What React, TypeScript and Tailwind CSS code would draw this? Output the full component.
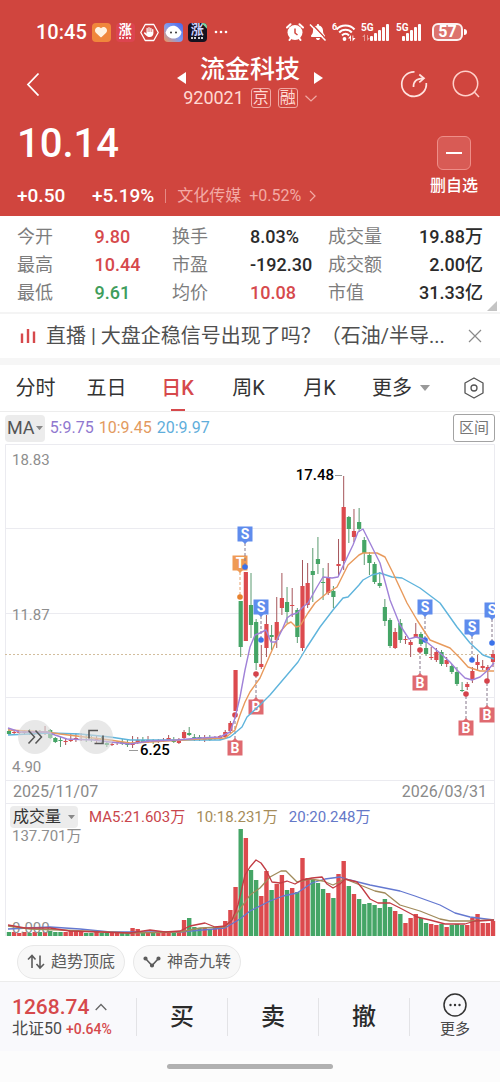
import { FaBell, FaHand, FaHeart } from "react-icons/fa6";

const UP = "#dc4a4e";
const DOWN = "#45a566";

type TStat = {
  label: string
  value: string
  color?: string
}

// [direction, body top, body bottom, wick top, wick bottom, volume height]
type TCandle = [number, number, number, number, number, number];

type TMarker = {
  kind: "S" | "B" | "T"
  x: number
  y: number
  dot: number
}

const stats: TStat[] = [
  { label: "今开", value: "9.80", color: "text-[#d6494c]" },
  { label: "换手", value: "8.03%" },
  { label: "成交量", value: "19.88万" },
  { label: "最高", value: "10.44", color: "text-[#d6494c]" },
  { label: "市盈", value: "-192.30" },
  { label: "成交额", value: "2.00亿" },
  { label: "最低", value: "9.61", color: "text-[#3f9d5c]" },
  { label: "均价", value: "10.08", color: "text-[#d6494c]" },
  { label: "市值", value: "31.33亿" },
];

const tabs = ["分时", "五日", "日K", "周K", "月K"];

const candles: TCandle[] = [
  [0, 731, 734, 729, 735, 4], [1, 732, 733, 730, 735, 4], [1, 732, 733, 730, 735, 3], [1, 731, 733, 730, 734, 4],
  [0, 731, 733, 729, 735, 3], [1, 732, 734, 731, 735, 4], [0, 732, 733, 730, 735, 4], [1, 731, 733, 726, 735, 4],
  [0, 730, 738, 729, 739, 5], [0, 738, 742, 737, 743, 4], [0, 740, 741, 737, 747, 4], [1, 741, 742, 738, 745, 4],
  [1, 740, 741, 733, 742, 5], [1, 738, 740, 733, 742, 6], [1, 739, 740, 733, 741, 5], [0, 739, 740, 735, 742, 3],
  [0, 739, 740, 736, 742, 3], [1, 739, 741, 735, 743, 4], [0, 738, 740, 736, 743, 3], [0, 743, 745, 741, 747, 3],
  [1, 744, 745, 742, 746, 4], [1, 742, 743, 741, 745, 3], [0, 742, 744, 739, 745, 3], [0, 743, 745, 740, 747, 4],
  [1, 743, 745, 736, 748, 8], [1, 740, 742, 737, 744, 7], [0, 740, 742, 737, 743, 4], [1, 740, 741, 736, 743, 4],
  [0, 741, 742, 739, 744, 4], [1, 740, 742, 739, 743, 4], [1, 740, 741, 738, 742, 5], [1, 738, 740, 735, 741, 4],
  [0, 740, 742, 737, 743, 3], [1, 741, 743, 738, 744, 4], [1, 732, 738, 730, 739, 16], [0, 733, 735, 727, 736, 18],
  [0, 737, 739, 734, 741, 9], [0, 737, 739, 735, 741, 8], [1, 738, 740, 735, 742, 8], [0, 738, 740, 735, 741, 7],
  [1, 738, 739, 736, 740, 8], [1, 736, 738, 735, 740, 9], [1, 732, 737, 730, 738, 15], [1, 723, 731, 721, 733, 26],
  [1, 670, 711, 670, 711, 49], [0, 601, 647, 601, 657, 107], [1, 572, 641, 572, 641, 98], [0, 605, 625, 573, 638, 66],
  [0, 622, 663, 619, 670, 56], [1, 664, 667, 645, 669, 40], [1, 624, 648, 615, 657, 65], [0, 635, 637, 625, 650, 46],
  [1, 622, 640, 597, 648, 52], [1, 598, 608, 573, 615, 61], [0, 602, 612, 587, 623, 46], [1, 605, 606, 588, 617, 48],
  [0, 610, 637, 608, 643, 44], [1, 586, 648, 560, 651, 78], [1, 583, 605, 563, 608, 58], [0, 571, 575, 548, 602, 56],
  [0, 559, 564, 537, 574, 53], [0, 582, 583, 568, 600, 47], [1, 577, 593, 563, 595, 43], [0, 591, 597, 586, 608, 38],
  [1, 564, 566, 539, 575, 62], [1, 507, 561, 476, 570, 75], [0, 517, 529, 516, 543, 50], [1, 531, 537, 509, 542, 42],
  [0, 522, 529, 508, 532, 37], [0, 540, 553, 537, 565, 32], [0, 555, 563, 552, 575, 33], [0, 564, 582, 562, 584, 31],
  [0, 583, 586, 572, 588, 28], [0, 607, 621, 599, 626, 37], [0, 620, 646, 618, 648, 29], [1, 632, 648, 628, 649, 25],
  [0, 623, 640, 619, 643, 22], [1, 639, 640, 636, 644, 13], [1, 642, 645, 640, 657, 18], [1, 634, 637, 623, 638, 22],
  [0, 634, 644, 632, 646, 18], [0, 648, 654, 640, 656, 13], [1, 657, 658, 647, 660, 12], [1, 652, 660, 648, 662, 11],
  [0, 652, 664, 650, 666, 12], [1, 660, 664, 657, 667, 9], [0, 666, 672, 664, 674, 11], [0, 672, 684, 667, 686, 12],
  [0, 690, 691, 682, 692, 11], [1, 684, 687, 682, 690, 11], [1, 671, 680, 667, 683, 18], [1, 662, 665, 655, 670, 22],
  [1, 666, 668, 660, 670, 13], [1, 667, 670, 665, 680, 13], [1, 654, 662, 650, 667, 15],
];

const markers: TMarker[] = [
  { kind: "T", x: 240, y: 563, dot: 597 },
  { kind: "S", x: 245, y: 534, dot: 567 },
  { kind: "S", x: 261, y: 607, dot: 640 },
  { kind: "B", x: 256, y: 707, dot: 674 },
  { kind: "B", x: 235, y: 748, dot: 715 },
  { kind: "S", x: 425, y: 607, dot: 640 },
  { kind: "B", x: 420, y: 683, dot: 650 },
  { kind: "S", x: 472, y: 627, dot: 660 },
  { kind: "B", x: 466, y: 728, dot: 694 },
  { kind: "B", x: 487, y: 715, dot: 681 },
  { kind: "S", x: 492, y: 610, dot: 643 },
];

const markerFill = { S: "#5f8ced", B: "#df6a70", T: "#ef9a55" };
const markerDot = { S: "#3a72ea", B: "#d5434b", T: "#e8822e" };

const ma5 = "8,728 20,732 47,732 55,735 67,739 93,740 110,742 130,744 150,741 177,740 200,738 220,737 230,732 235,718 240,697 245,670 250,647 255,635 260,633 266,630 271,642 276,642 282,630 287,618 291,615 297,613 303,607 308,603 317,587 323,577 332,578 338,577 343,566 353,545 358,532 363,529 370,543 380,563 390,600 400,625 409,639 416,637 423,639 440,653 450,662 457,670 465,678 472,680 480,677 487,671 494,663";
const ma10 = "8,730 47,732 60,734 93,738 110,740 130,743 150,742 200,739 225,738 235,730 240,715 245,702 250,692 260,678 270,655 280,632 287,624 291,622 296,627 300,626 308,613 315,603 327,593 337,587 343,575 348,565 359,555 363,553 377,553 385,557 393,573 407,603 417,620 430,640 450,648 460,658 468,667 480,671 494,671";
const ma20 = "8,735 50,733 80,734 110,737 130,740 170,740 220,740 230,737 235,733 242,727 247,717 260,705 270,695 287,675 298,662 307,647 320,627 333,610 343,598 348,597 359,585 363,580 372,575 380,573 392,577 402,578 420,588 440,603 457,627 470,643 483,655 494,659";

const vol5 = "8,925 25,928 50,928 70,931 130,933 150,930 165,932 180,931 190,926 205,923 215,927 225,926 232,920 238,905 245,875 250,867 256,860 261,863 266,870 272,882 280,883 287,881 295,884 302,880 312,878 322,877 327,884 333,888 340,884 345,879 357,882 362,888 370,899 378,903 390,903 400,908 417,917 430,920 445,924 465,924 475,921 494,920";
const vol10 = "8,926 30,929 60,930 130,933 180,932 200,928 225,927 235,916 243,905 250,895 260,888 270,877 281,871 286,871 297,882 310,879 323,881 333,885 345,879 360,885 375,891 385,893 400,905 420,911 440,919 450,921 470,921 494,920";
const vol20 = "8,929 50,927 80,929 110,932 180,932 225,928 240,919 250,911 270,901 283,896 297,893 312,883 325,879 340,877 350,880 370,885 400,891 415,896 440,905 455,913 470,917 494,920";

function candleX(i: number) {
  return 9 + (i * 484) / 94;
}

function Caret({ className }: { className?: string }) {
  return (
    <svg viewBox="0 0 10 6" className={className} fill="currentColor" aria-hidden="true">
      <path d="M0 0h10L5 6z" />
    </svg>
  );
}

function Signal({ bars, data }: { bars: number[], data?: boolean }) {
  return (
    <svg width={data ? 30 : 27} height="20" viewBox={data ? "0 0 30 20" : "0 0 27 20"} fill="#fff" aria-hidden="true">
      <text x="0" y="9" fontSize="10" fontWeight="700">5G</text>
      {data && <path d="M4 12l-3 3h2v4h1zM6 19l3-3H7v-3H6z" opacity=".45" />}
      {bars.map((h, i) => (
        <rect key={i} x={(data ? 9 : 6) + i * 4} y={19 - h} width="3" height={h} rx="1" />
      ))}
    </svg>
  );
}

function StatusBar() {
  return (
    <div className="flex h-14 items-center justify-between pt-2 pr-[33px] pl-9">
      <div className="flex items-center gap-[5px]">
        <span className="text-xl font-medium">10:45</span>
        <span className="flex size-[19px] items-center justify-center rounded bg-[#f0873c]">
          <FaHeart className="size-3 text-[#fff3e2]" />
        </span>
        <span className="flex size-[19px] flex-col items-center rounded bg-[#dc4450]">
          <span className="text-[13px] leading-[14px] font-bold">涨</span>
          <span className="w-3 border-t-2 border-dotted border-white/80" />
        </span>
        <span className="relative flex size-[19px] items-center justify-center">
          <svg viewBox="0 0 19 19" className="absolute inset-0" fill="none" stroke="#fff" strokeWidth="1.3" aria-hidden="true">
            <path d="M5.2 1.5h8.6l4.4 8-4.4 8H5.2l-4.4-8z" strokeLinejoin="round" />
          </svg>
          <FaHand className="size-[10px]" />
        </span>
        <svg width="19" height="19" viewBox="0 0 19 19" aria-hidden="true">
          <defs>
            <linearGradient id="face" x1="1" y1="0" x2="0" y2="1">
              <stop offset="0" stopColor="#4a63e8" />
              <stop offset=".5" stopColor="#7f9cf0" />
              <stop offset="1" stopColor="#f0955c" />
            </linearGradient>
          </defs>
          <rect width="19" height="19" rx="4" fill="url(#face)" />
          <path d="M1.500 9.500C3 5 5.500 2.800 9 2.800c4 0 6 2.700 8.500 6.200-.5 4-3.500 6.500-8 6.500s-7-2.500-8-6z" fill="#fff" />
          <circle cx="7" cy="9.500" r="1" fill="#333" />
          <circle cx="12" cy="9.500" r="1" fill="#333" />
        </svg>
        <span className="relative flex size-[19px] flex-col items-center overflow-hidden rounded bg-[#15121f]">
          <span className="absolute -top-1 -right-1 size-2 rotate-45 bg-[#7fd0a0]" />
          <span className="text-[13px] leading-[14px] font-bold text-[#cfd4ff]">涨</span>
          <span className="w-3 border-t-2 border-dotted border-white/80" />
        </span>
        <svg width="20" height="4" viewBox="0 0 20 4" fill="#fff" aria-hidden="true">
          <circle cx="4" cy="2" r="1.300" />
          <circle cx="9" cy="2" r="1.300" />
          <circle cx="14" cy="2" r="1.300" />
        </svg>
      </div>
      <div className="flex items-center gap-[5px]">
        <svg width="18" height="18" viewBox="0 0 18 18" aria-hidden="true">
          <circle cx="9" cy="9.500" r="7.500" fill="#fff" />
          <path d="M1 4.500L4.500 1.200M17 4.500L13.500 1.200M3.500 17l1.500-2M14.500 17L13 15" stroke="#fff" strokeWidth="2" strokeLinecap="round" />
          <path d="M9 5.500v4.500l2.500 2" fill="none" stroke="#d0453e" strokeWidth="1.500" />
        </svg>
        <span className="relative flex size-[18px] items-center justify-center">
          <FaBell className="size-4" />
          <svg viewBox="0 0 18 18" className="absolute inset-0" aria-hidden="true">
            <path d="M2.500 .5l15 16" stroke="#d0453e" strokeWidth="1.500" />
            <path d="M1 1.500l15.500 16" stroke="#fff" strokeWidth="1.500" />
          </svg>
        </span>
        <svg width="24" height="20" viewBox="0 0 24 20" fill="none" stroke="#fff" aria-hidden="true">
          <text x="0" y="8" fontSize="9" fontWeight="700" fill="#fff" stroke="none">6</text>
          <path d="M4.500 7.500c4.500-5.500 13.500-5.500 18 0M7.200 10.500c3.200-3.800 9.400-3.800 12.600 0M10 13.500c2-2.200 5-2.200 7 0" strokeWidth="2" />
          <circle cx="12.500" cy="17" r="1.900" fill="#fff" stroke="none" />
          <path d="M19 13l-3 3.500h2.200V19H19zM20.500 19.500l3-3.500h-2.200v-2.500h-.8z" fill="#fff" stroke="none" />
        </svg>
        <Signal bars={[5, 8, 11, 14, 17]} data />
        <Signal bars={[5, 8, 11, 14, 17]} />
        <span className="ml-1 flex items-center gap-px">
          <span className="flex h-[18px] w-[31px] items-center justify-center rounded-md border-2 border-white/90 bg-white/25 text-base leading-none font-bold">
            57
          </span>
          <span className="h-1.5 w-[3px] rounded-r bg-white" />
        </span>
      </div>
    </div>
  );
}

function Header() {
  return (
    <header className="bg-[#d0453e] text-white">
      <StatusBar />
      <div className="flex h-14 items-center px-5">
        <div className="flex flex-1">
          <button type="button" aria-label="返回">
            <svg width="24" height="24" viewBox="0 0 24 24" fill="none" stroke="#fff" strokeWidth="1.800" aria-hidden="true">
              <path d="M18.500 1.500L8 12.500l10.500 11" />
            </svg>
          </button>
        </div>
        <div className="flex flex-col items-center">
          <div className="flex h-7 items-center gap-[14px]">
            <button type="button" aria-label="上一只" className="self-end">
              <svg width="9" height="12" viewBox="0 0 9 12" fill="#fff" aria-hidden="true">
                <path d="M9 0v12L0 6z" />
              </svg>
            </button>
            <h1 className="text-[25px] leading-7 font-medium">流金科技</h1>
            <button type="button" aria-label="下一只" className="self-end">
              <svg width="9" height="12" viewBox="0 0 9 12" fill="#fff" aria-hidden="true">
                <path d="M0 0v12l9-6z" />
              </svg>
            </button>
          </div>
          <div className="flex h-7 items-center gap-[7px] text-[#ffd9d3]">
            <span className="text-lg">920021</span>
            <span className="flex size-5 items-center justify-center rounded-[3px] border border-[#f0a9a4] text-base leading-none">京</span>
            <span className="flex size-5 items-center justify-center rounded-[3px] border border-[#f0a9a4] text-base leading-none">融</span>
            <svg width="12" height="7" viewBox="0 0 12 7" fill="none" stroke="#f0a9a4" strokeWidth="1.200" aria-hidden="true">
              <path d="M.5 .8L6 6l5.500-5.200" />
            </svg>
          </div>
        </div>
        <div className="flex flex-1 justify-end gap-6">
          <button type="button" aria-label="分享">
            <svg width="28" height="28" viewBox="0 0 28 28" fill="none" stroke="#ffe3df" strokeWidth="1.700" aria-hidden="true">
              <path d="M14.500 1.800A12.300 12.300 0 1 0 26.300 13" />
              <path d="M13.500 17c-.3-5 2.500-8.500 10-8.700M19.300 4.500l4.700 3.800-4.700 4" />
            </svg>
          </button>
          <button type="button" aria-label="搜索">
            <svg width="28" height="28" viewBox="0 0 28 28" fill="none" stroke="#ffd0ca" strokeWidth="1.500" aria-hidden="true">
              <circle cx="13.500" cy="13.500" r="12.200" />
              <path d="M22.300 22l4.700 5" />
            </svg>
          </button>
        </div>
      </div>
      <div className="flex justify-between pr-[22px] pl-[17px]">
        <div>
          <div className="flex h-16 items-center text-[40px] font-medium">10.14</div>
          <div className="flex h-10 items-center">
            <span className="w-[75px] text-[19px] font-medium">+0.50</span>
            <span className="text-[19px] font-medium">+5.19%</span>
            <span className="mx-[11px] h-[14px] w-px bg-[#e58a85]" />
            <a href="#sector" className="flex items-center gap-2 text-base text-[#f3aaa5]">
              <span>文化传媒</span>
              <span>+0.52%</span>
              <svg width="7" height="12" viewBox="0 0 7 12" fill="none" stroke="currentColor" strokeWidth="1.200" aria-hidden="true">
                <path d="M1 1l5 5-5 5" />
              </svg>
            </a>
          </div>
        </div>
        <button type="button" className="flex flex-col items-center self-start pt-6">
          <span className="flex size-[34px] items-center justify-center rounded-md border border-[#ee8e88] bg-[#d85b55]">
            <span className="h-0.5 w-4 bg-white" />
          </span>
          <span className="mt-1 text-base leading-6 font-medium">删自选</span>
        </button>
      </div>
    </header>
  );
}

function Stats() {
  return (
    <section className="relative px-[17px] pt-[7px] pb-[5px]">
      <dl className="grid grid-cols-[155fr_156fr_155fr] text-lg leading-7">
        {stats.map((s, i) => (
          <div key={s.label} className="flex">
            <dt className={`text-[#7d7d7d] ${i % 3 === 2 ? "flex-1" : "w-1/2"}`}>{s.label}</dt>
            <dd className={`font-medium whitespace-nowrap ${s.color ?? "text-[#2b2b2b]"}`}>{s.value}</dd>
          </div>
        ))}
      </dl>
      <svg width="10" height="10" viewBox="0 0 10 10" className="absolute right-[3px] bottom-px" aria-hidden="true">
        <path d="M10 0v10H0z" fill="#c4c4c4" />
      </svg>
    </section>
  );
}

function News() {
  return (
    <div className="flex h-[46px] items-center border-t-2 border-[#f4f4f4] pr-[18px] pl-5">
      <svg width="16" height="16" viewBox="0 0 16 16" stroke="#d6494c" strokeWidth="2.400" aria-hidden="true">
        <path d="M2 5.500V15M8 1v14M14 3.500V15" />
      </svg>
      <a href="#live" className="ml-[10px] flex-1 truncate text-xl text-[#4f4f4f]">
        直播 | 大盘企稳信号出现了吗？（石油/半导...
      </a>
      <button type="button" aria-label="关闭" className="ml-2">
        <svg width="14" height="14" viewBox="0 0 14 14" stroke="#8a8a8a" strokeWidth="1.200" aria-hidden="true">
          <path d="M1 1l12 12M13 1L1 13" />
        </svg>
      </button>
    </div>
  );
}

function Tabs() {
  return (
    <nav className="grid h-[47px] grid-cols-[71fr_71fr_71fr_71fr_71fr_92fr_53fr] border-b border-[#ededed] text-xl text-[#333]">
      {tabs.map((tab) => (
        <button
          key={tab}
          type="button"
          className={tab === "日K" ? "relative font-medium text-[#d6494c]" : ""}
        >
          {tab}
          {tab === "日K" && <span className="absolute bottom-0 left-1/2 h-0.5 w-[14px] -translate-x-1/2 bg-[#d6494c]" />}
        </button>
      ))}
      <button type="button" className="flex items-center justify-center gap-2">
        更多
        <Caret className="w-[10px] text-[#999]" />
      </button>
      <button type="button" aria-label="设置" className="flex items-center justify-center">
        <svg width="22" height="22" viewBox="0 0 22 22" fill="none" stroke="#555" strokeWidth="1.300" aria-hidden="true">
          <path d="M11 1l9 5v10l-9 5-9-5V6z" strokeLinejoin="round" />
          <circle cx="11" cy="11" r="3" />
        </svg>
      </button>
    </nav>
  );
}

function Marker({ kind, x, y, dot }: TMarker) {
  const below = kind === "B";
  return (
    <g>
      <line x1={x} x2={x} y1={below ? y - 9 : y + 9} y2={dot} stroke={kind === "T" ? "#e9a06b" : "#85778a"} strokeDasharray="3 2" />
      <rect x={x - 7.5} y={y - 7.5} width="15" height="15" fill={markerFill[kind]} />
      <path d={below ? `M${x - 3} ${y - 7}l3-3 3 3z` : `M${x - 3} ${y + 7}l3 3 3-3z`} fill={markerFill[kind]} />
      <text x={x} y={y + 5} textAnchor="middle" fontSize="14" fontWeight="700" fill="#fff">{kind}</text>
      <circle cx={x} cy={dot} r="2.800" fill={markerDot[kind]} />
    </g>
  );
}

function PriceChart() {
  return (
    <div className="relative">
      <svg viewBox="0 444 500 337" className="block w-full" role="img" aria-label="日K线图">
        <defs>
          <clipPath id="plot">
            <rect x="5" y="444" width="490" height="337" />
          </clipPath>
        </defs>
        <g stroke="#ebebf0" fill="none">
          <path d="M5.500 781V444.500h489V781M5 528.500h490M5 613.500h490M5 697.500h490M5 780.500h490" />
        </g>
        <path d="M5 654.500h490" stroke="#d2bd9c" strokeDasharray="2 2" />
        <g fontSize="15" fill="#8e8e8e">
          <text x="12" y="465">18.83</text>
          <text x="12" y="620">11.87</text>
          <text x="12" y="772">4.90</text>
        </g>
        <g clipPath="url(#plot)">
          {candles.map(([up, top, bottom, high, low], i) => (
            <g key={i} fill={up ? UP : DOWN} stroke={up ? "#a5555a" : "#5b9a70"}>
              <line x1={candleX(i)} x2={candleX(i)} y1={high} y2={low} />
              <rect x={candleX(i) - 2.1} y={top} width="4.200" height={bottom - top} stroke="none" />
            </g>
          ))}
          {markers.map((m) => (
            <Marker key={`${m.kind}${m.x}`} {...m} />
          ))}
          <g fill="none" strokeWidth="1.400" strokeLinejoin="round">
            <polyline points={ma20} stroke="#5fb4dc" />
            <polyline points={ma10} stroke="#e89a5c" />
            <polyline points={ma5} stroke="#a082d8" />
          </g>
        </g>
        <path d="M335 475.500h7M129 750.500h9" stroke="#999" />
        <g fontSize="15" fontWeight="500" fill="#000">
          <text x="334" y="480" textAnchor="end">17.48</text>
          <text x="140" y="755">6.25</text>
        </g>
      </svg>
      <button type="button" aria-label="展开" className="absolute top-[276px] left-[18px] flex size-[34px] items-center justify-center rounded-full bg-[#d9d9d9]/60">
        <svg width="16" height="16" viewBox="0 0 16 16" fill="none" stroke="#555" strokeWidth="1.500" aria-hidden="true">
          <path d="M1.500 1.500L7.500 8l-6 6.500M8.500 1.500l6 6.500-6 6.500" />
        </svg>
      </button>
      <button type="button" aria-label="全屏" className="absolute top-[276px] left-[79px] flex size-[34px] items-center justify-center rounded-full bg-[#d9d9d9]/60">
        <svg width="16" height="16" viewBox="0 0 16 16" fill="none" stroke="#555" strokeWidth="1.600" aria-hidden="true">
          <path d="M1 9.500V1.500h9M15 6.500v8H6.500" />
        </svg>
      </button>
    </div>
  );
}

function VolumeChart() {
  return (
    <svg viewBox="0 828 500 108" className="block w-full" role="img" aria-label="成交量图">
      <path d="M5.500 828v108M494.500 828v108" stroke="#ebebf0" />
      {candles.map((c, i) => (
        <rect key={i} x={candleX(i) - 2.2} y={936 - c[5]} width="4.400" height={c[5]} fill={c[0] ? UP : DOWN} />
      ))}
      <g fontSize="15" fill="#8e8e8e">
        <text x="12" y="841">137.701万</text>
        <text x="12" y="933">0.000</text>
      </g>
      <g fill="none" strokeWidth="1.300" strokeLinejoin="round">
        <polyline points={vol20} stroke="#6478d0" />
        <polyline points={vol10} stroke="#a08a5a" />
        <polyline points={vol5} stroke="#c23c44" />
      </g>
    </svg>
  );
}

function Chips() {
  return (
    <div className="flex gap-2 px-[17px] pt-[9px] pb-[2px] text-base text-[#5c5c5c]">
      <button type="button" className="flex h-[34px] items-center gap-1.5 rounded-full border border-[#e8e8e8] bg-[#f8f8f8] px-[9px]">
        <svg width="18" height="16" viewBox="0 0 18 16" fill="none" stroke="currentColor" strokeWidth="1.600" aria-hidden="true">
          <path d="M1 5.500l4-4 3.500 4M5 1.500V14M13 1.500V14M9.500 10l3.500 4 4-4" />
        </svg>
        趋势顶底
      </button>
      <button type="button" className="flex h-[34px] items-center gap-1.5 rounded-full border border-[#e8e8e8] bg-[#f8f8f8] px-[9px]">
        <svg width="18" height="12" viewBox="0 0 18 12" fill="currentColor" stroke="currentColor" strokeWidth="1.600" aria-hidden="true">
          <path d="M2.500 2.500L9 9.500l6.500-7" fill="none" />
          <circle cx="2.500" cy="2.500" r="1.300" />
          <circle cx="9" cy="9.500" r="1.300" />
          <circle cx="15.500" cy="2.500" r="1.300" />
        </svg>
        神奇九转
      </button>
    </div>
  );
}

function BottomBar() {
  return (
    <footer className="border-t border-[#ececec] bg-[#f9f9fc]">
      <div className="flex h-[69px] items-center text-[#2b2b2b]">
        <button type="button" className="w-[136px] pl-3 text-left">
          <span className="flex items-center gap-1.5 text-[21px] leading-6 font-medium text-[#d6494c]">
            1268.74
            <svg width="12" height="8" viewBox="0 0 12 8" fill="none" stroke="#666" strokeWidth="1.300" aria-hidden="true">
              <path d="M.7 7L6 1.500 11.300 7" />
            </svg>
          </span>
          <span className="flex items-center gap-1 text-base leading-5 text-[#4a4a4a]">
            北证50
            <span className="text-sm font-medium text-[#d6494c]">+0.64%</span>
          </span>
        </button>
        {["买", "卖", "撤"].map((label) => (
          <button key={label} type="button" className="h-[38px] flex-1 border-l border-[#e3e3e6] text-2xl font-medium">
            {label}
          </button>
        ))}
        <div className="flex h-[38px] flex-1 items-center justify-center border-l border-[#e3e3e6]">
          <button type="button" className="flex flex-col items-center text-[15px] leading-6 text-[#4a4a4a]">
            <svg width="24" height="24" viewBox="0 0 24 24" fill="none" stroke="#333" strokeWidth="1.500" aria-hidden="true">
              <circle cx="12" cy="12" r="11" />
              <g fill="#333" stroke="none">
                <circle cx="7.500" cy="12" r="1.200" />
                <circle cx="12" cy="12" r="1.200" />
                <circle cx="16.500" cy="12" r="1.200" />
              </g>
            </svg>
            更多
          </button>
        </div>
      </div>
      <div className="flex justify-center bg-[#fcfcfc] py-[13px]">
        <span className="h-[5px] w-1/3 rounded-full bg-[#b1b1b1]" />
      </div>
    </footer>
  );
}

export default function App() {
  return (
    <main className="bg-white font-['Roboto','Noto_Sans_CJK_SC',sans-serif]">
      <Header />
      <Stats />
      <News />
      <div className="h-[7px] bg-[#f6f6f6]" />
      <Tabs />
      <div className="flex h-8 items-center gap-[5px] px-[5px] text-base">
        <button type="button" className="flex h-[27px] items-center gap-px rounded-sm bg-[#ececec] px-0.5 text-lg text-[#555]">
          MA
          <Caret className="w-[7px] text-[#888]" />
        </button>
        <span className="text-[#9078cf]">5:9.75</span>
        <span className="text-[#e39a5e]">10:9.45</span>
        <span className="text-[#5faedb]">20:9.97</span>
        <button type="button" className="ml-auto h-7 rounded-[3px] border border-[#a3a3a3] px-[5px] text-[15px] leading-none text-[#777]">
          区间
        </button>
      </div>
      <PriceChart />
      <div className="mx-[5px] flex h-[23px] items-center justify-between border-x border-b border-[#ebebf0] px-[7px] text-base leading-none text-[#8a8a8a]">
        <span>2025/11/07</span>
        <span>2026/03/31</span>
      </div>
      <div className="mx-[5px] flex h-6 items-center gap-[11px] border-x border-[#ebebf0] pt-0.5 pl-1 text-[15px]">
        <button type="button" className="flex h-[22px] items-center gap-[7px] rounded-sm bg-[#ececec] px-[3px] text-base text-[#333]">
          成交量
          <Caret className="w-[7px] text-[#888]" />
        </button>
        <span className="text-[#c9454c]">MA5:21.603万</span>
        <span className="text-[#a58c5a]">10:18.231万</span>
        <span className="text-[#6478c8]">20:20.248万</span>
      </div>
      <VolumeChart />
      <Chips />
      <BottomBar />
    </main>
  );
}
